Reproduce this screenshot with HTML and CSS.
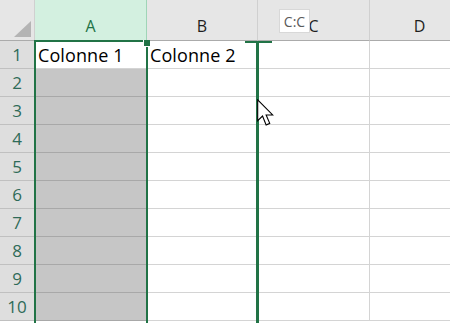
FILE: index.html
```html
<!DOCTYPE html>
<html lang="fr">
  <head>
    <meta charset="utf-8">
    <title>Feuille</title>
    <link rel="stylesheet" href="styles.css">
  </head>
  <body>
    <div class="Sheet">
      <div class="Grid">
        <div class="Corner"><span class="Corner-Tri"></span></div>
        <div class="Col-Head Col-Sel">A</div>
        <div class="Col-Head">B</div>
        <div class="Col-Head">C</div>
        <div class="Col-Head">D</div>

        <div class="Row-Head">1</div>
        <div class="Cell Cell-Active">Colonne 1</div>
        <div class="Cell">Colonne 2</div>
        <div class="Cell"></div>
        <div class="Cell"></div>

        <div class="Row-Head">2</div>
        <div class="Cell Cell-Sel"></div>
        <div class="Cell"></div>
        <div class="Cell"></div>
        <div class="Cell"></div>

        <div class="Row-Head">3</div>
        <div class="Cell Cell-Sel"></div>
        <div class="Cell"></div>
        <div class="Cell"></div>
        <div class="Cell"></div>

        <div class="Row-Head">4</div>
        <div class="Cell Cell-Sel"></div>
        <div class="Cell"></div>
        <div class="Cell"></div>
        <div class="Cell"></div>

        <div class="Row-Head">5</div>
        <div class="Cell Cell-Sel"></div>
        <div class="Cell"></div>
        <div class="Cell"></div>
        <div class="Cell"></div>

        <div class="Row-Head">6</div>
        <div class="Cell Cell-Sel"></div>
        <div class="Cell"></div>
        <div class="Cell"></div>
        <div class="Cell"></div>

        <div class="Row-Head">7</div>
        <div class="Cell Cell-Sel"></div>
        <div class="Cell"></div>
        <div class="Cell"></div>
        <div class="Cell"></div>

        <div class="Row-Head">8</div>
        <div class="Cell Cell-Sel"></div>
        <div class="Cell"></div>
        <div class="Cell"></div>
        <div class="Cell"></div>

        <div class="Row-Head">9</div>
        <div class="Cell Cell-Sel"></div>
        <div class="Cell"></div>
        <div class="Cell"></div>
        <div class="Cell"></div>

        <div class="Row-Head">10</div>
        <div class="Cell Cell-Sel"></div>
        <div class="Cell"></div>
        <div class="Cell"></div>
        <div class="Cell"></div>
      </div>

      <!-- selection de la colonne A -->
      <div class="Sel-Box"></div>
      <div class="Sel-Handle"></div>

      <!-- indicateur de deplacement -->
      <div class="Drop-Cap"></div>
      <div class="Drop-Line"></div>
      <div class="Tip">C:C</div>

      <svg class="Cursor" width="18" height="28" viewBox="0 0 13 20">
        <path d="M0.5 0.5 L0.5 15.5 L4 12.2 L6.6 18.6 L9.2 17.5 L6.6 11.4 L11.3 11.4 Z" fill="#fff" stroke="#000" stroke-width="0.8" stroke-linejoin="miter"/>
      </svg>
    </div>
  </body>
</html>
```

FILE: styles.css
```css
body {
  margin: 0;
  padding: 0;
  background: #ffffff;
  font-family: 'Open Sans', 'Noto Sans', sans-serif;
  overflow: hidden;
}

.Sheet {
  position: relative;
  width: 450px;
  height: 323px;
  overflow: hidden;
}

.Grid {
  display: grid;
  grid-template-columns: 35px 112px 111px 112px 100px;
  grid-template-rows: 41px repeat(10, 28px);
}

.Corner {
  position: relative;
  background: #e6e6e6;
  border-right: 1px solid #d0d0d0;
  border-bottom: 1px solid #ababab;
}

.Corner-Tri {
  position: absolute;
  right: 3px;
  bottom: 3px;
  width: 0;
  height: 0;
  border-left: 17px solid transparent;
  border-bottom: 16px solid #b4b4b4;
}

.Col-Head {
  display: flex;
  align-items: center;
  justify-content: center;
  padding-top: 11px;
  box-sizing: border-box;
  background: #e6e6e6;
  border-right: 1px solid #d0d0d0;
  border-bottom: 1px solid #ababab;
  font-size: 16px;
  color: #1e1e1e;
}

.Col-Sel {
  background: #d3f0e0;
  color: #217346;
  border-right-color: #9fd5b7;
}

.Row-Head {
  display: flex;
  align-items: center;
  justify-content: center;
  background: #dedede;
  border-right: 1px solid #c6c6c6;
  border-bottom: 1px solid #c0c0c0;
  font-size: 17px;
  color: #2f6b58;
}

.Cell {
  display: flex;
  align-items: center;
  padding-left: 3px;
  border-right: 1px solid #d4d4d4;
  border-bottom: 1px solid #d4d4d4;
  font-size: 18px;
  letter-spacing: 0.1px;
  color: #000000;
  white-space: nowrap;
}

.Cell-Active {
  background: #ffffff;
}

.Cell-Sel {
  background: #c6c6c6;
  border-bottom-color: #a8a8a8;
}

.Sel-Box {
  position: absolute;
  left: 34px;
  top: 40px;
  width: 110px;
  height: 290px;
  border: 2px solid #217346;
}

.Sel-Handle {
  position: absolute;
  left: 143px;
  top: 40px;
  width: 6px;
  height: 6px;
  background: #217346;
  border-left: 1px solid #ffffff;
  border-bottom: 1px solid #ffffff;
}

.Drop-Cap {
  position: absolute;
  left: 245px;
  top: 41px;
  width: 27px;
  height: 2px;
  background: #217346;
}

.Drop-Line {
  position: absolute;
  left: 256px;
  top: 41px;
  width: 3px;
  height: 290px;
  background: #217346;
}

.Tip {
  position: absolute;
  left: 279px;
  top: 9px;
  width: 31px;
  height: 24px;
  display: flex;
  align-items: center;
  justify-content: center;
  box-sizing: border-box;
  background: #ffffff;
  border: 1px solid #d8d8d8;
  font-size: 14px;
  color: #5a5a5a;
}

.Cursor {
  position: absolute;
  left: 257px;
  top: 99px;
}
```
